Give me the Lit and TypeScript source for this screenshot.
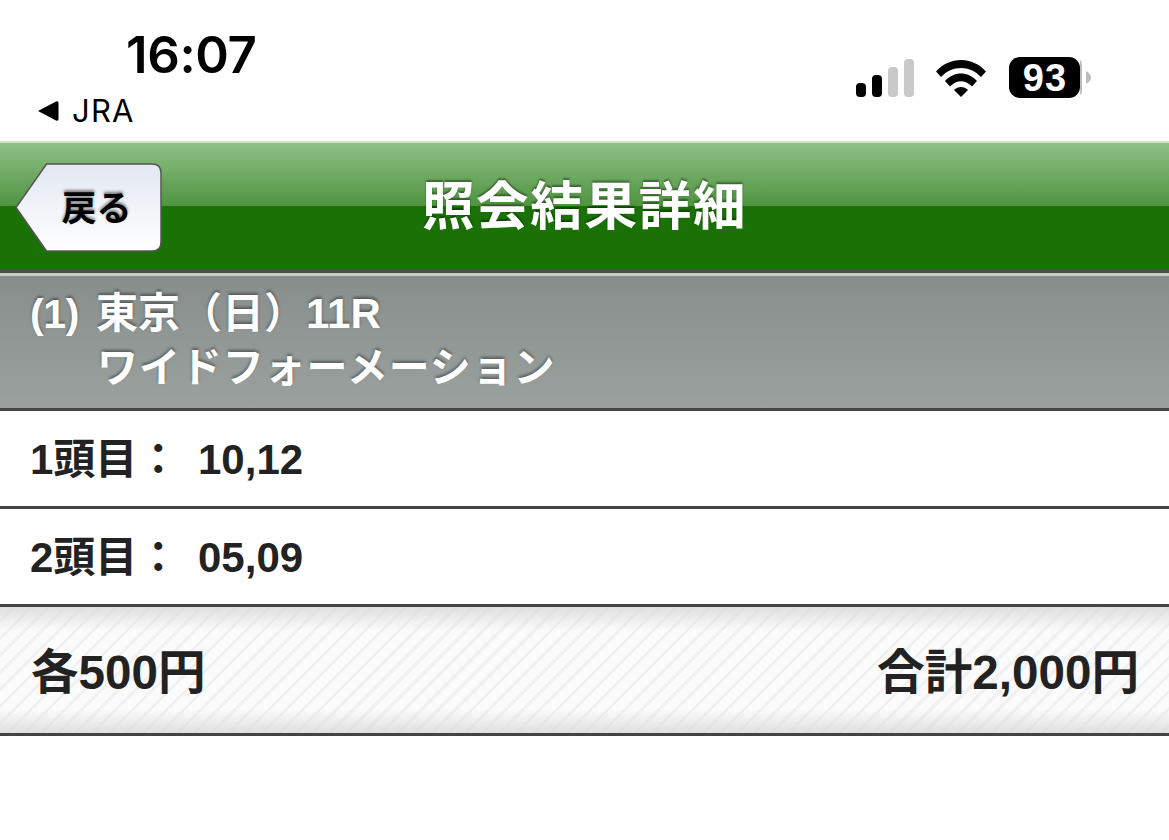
import { LitElement, html, css } from "lit";
import { customElement } from "lit/decorators.js";

@customElement("app-root")
export class AppRoot extends LitElement {
  static styles = css`
    :host {
      display: block;
      width: 1169px;
      height: 840px;
      background: #fff;
      overflow: hidden;
      font-family: "Liberation Sans", "Noto Sans CJK JP", sans-serif;
      font-weight: 700;
      color: #222;
    }
    .status {
      height: 141px;
      box-sizing: border-box;
      display: flex;
      justify-content: space-between;
      background: #fff;
      color: #000;
      font-family: Inter, "Liberation Sans", sans-serif;
    }
    .status-left {
      padding: 25px 0 0 37px;
      display: flex;
      flex-direction: column;
    }
    .time {
      font-size: 51px;
      line-height: 60px;
      font-weight: 600;
      letter-spacing: -0.4px;
      margin-left: 89px;
    }
    .app-back {
      display: flex;
      align-items: center;
      gap: 13px;
      font-size: 31px;
      line-height: 36px;
      font-weight: 400;
      letter-spacing: 1.2px;
      margin-top: 8px;
    }
    .app-back svg { display: block; }
    .status-right {
      display: flex;
      align-items: center;
      padding: 15px 78px 0 0;
      height: 140px;
      box-sizing: border-box;
    }
    .signal { display: block; margin-right: 22px; }
    .wifi { display: block; margin-right: 23px; }
    .battery { display: block; }
    .battery text {
      font-family: "Liberation Sans", sans-serif;
      font-weight: 700;
      font-size: 38px;
      letter-spacing: 1px;
    }
    .header {
      height: 129px;
      box-sizing: border-box;
      display: grid;
      grid-template-columns: 1fr auto 1fr;
      align-items: center;
      padding: 0 15px;
      border-top: 2px solid #cfe5c8;
      background: linear-gradient(#8fc086 0, #4f9440 63px, #1a7106 63px, #1a7106 100%);
    }
    .back {
      position: relative;
      width: 147px;
      height: 89px;
      align-self: start;
      margin-top: 20px;
      display: flex;
      align-items: center;
      justify-content: center;
      font-size: 35px;
      color: #000;
      text-shadow: 0 -2px 3px rgba(0, 0, 0, 0.5);
    }
    .back svg { position: absolute; inset: 0; }
    .back span { position: relative; left: 8px; top: -2px; }
    .title {
      color: #fff;
      font-size: 52.5px;
      line-height: 60px;
      letter-spacing: 1.7px;
      text-shadow: 0 -2px 2px rgba(0, 0, 0, 0.4);
    }
    .rule-a { height: 3px; background: #4a4f48; }
    .race {
      height: 135px;
      box-sizing: border-box;
      border-top: 3px solid #c9cecb;
      padding: 11px 0 0 30px;
      background: linear-gradient(#888e8b, #9aa19e);
      color: #fff;
      font-size: 41px;
      text-shadow: 0 -2px 3px rgba(0, 0, 0, 0.4);
      display: grid;
      grid-template-columns: 67px auto;
      grid-auto-rows: 54px;
      align-content: start;
      justify-content: start;
    }
    .race div { line-height: 54px; }
    .race .name { font-size: 42px; margin-left: -1px; }
    .race .num { font-size: 41px; letter-spacing: -0.3px; }
    .race .kana { grid-column: 2; letter-spacing: 0.9px; }
    .rule { height: 3px; background: #444; }
    .row {
      height: 95px;
      box-sizing: border-box;
      padding: 0 0 0 30px;
      font-size: 42px;
      line-height: 97px;
      background: #fff;
    }
    .row .label { display: inline-block; width: 168px; }
    .footer {
      height: 126px;
      box-sizing: border-box;
      padding: 0 30px 4px 31px;
      display: flex;
      align-items: center;
      justify-content: space-between;
      font-size: 47.6px;
      background:
        linear-gradient(rgba(215, 215, 215, 0.75), rgba(255, 255, 255, 0) 24px, rgba(255, 255, 255, 0) 102px, rgba(215, 215, 215, 0.75)),
        repeating-linear-gradient(135deg, #fbfbfb 0 9px, #f1f1f1 9px 12px);
    }
  `;

  render() {
    return html`
      <div class="status">
        <div class="status-left">
          <div class="time">16:07</div>
          <div class="app-back">
            <svg width="22" height="22" viewBox="0 0 22 22"><path d="M1 11 19 1.500q2.500-.8 2.500 1.500v16q0 2.300-2.500 1.500z" fill="#000"/></svg>
            <span>JRA</span>
          </div>
        </div>
        <div class="status-right">
          <svg class="signal" width="58" height="38" viewBox="0 0 58 38">
            <rect x="0" y="24" width="10" height="14" rx="4" fill="#000"/>
            <rect x="16" y="16" width="10" height="22" rx="4" fill="#000"/>
            <rect x="32" y="8" width="10" height="30" rx="4" fill="#c9c9c9"/>
            <rect x="48" y="0" width="10" height="38" rx="4" fill="#c9c9c9"/>
          </svg>
          <svg class="wifi" width="50" height="38" viewBox="0 0 50 38">
            <path d="M0 12.500C13-3 37-3 50 12.500L45 18C34 6 16 6 5 18Z" fill="#000"/>
            <path d="M9 22C18 12 32 12 41 22L36 27.500C29 20.500 21 20.500 14 27.500Z" fill="#000"/>
            <path d="M18 31C22 27 28 27 32 31L25 38Z" fill="#000"/>
          </svg>
          <svg class="battery" width="82" height="42" viewBox="0 0 82 42">
            <rect x="0" y="0" width="71" height="41" rx="11" fill="#000"/>
            <path d="M71 3q2 1 2 6v23q0 5-2 6z" fill="#bdbdbd"/>
            <path d="M77 14q5 3 5 6.500t-5 6.500z" fill="#bdbdbd"/>
            <text x="36" y="34" text-anchor="middle" fill="#fff">93</text>
          </svg>
        </div>
      </div>
      <div class="header">
        <div class="back">
          <svg width="147" height="89" viewBox="0 0 147 89">
            <defs>
              <linearGradient id="bk" x1="0" y1="0" x2="0" y2="1">
                <stop offset="0" stop-color="#e2e8f2"/>
                <stop offset="1" stop-color="#ffffff"/>
              </linearGradient>
            </defs>
            <path d="M31.500 1H137q9 0 9 9v69q0 9-9 9H31.500L1 44.500Z" fill="url(#bk)" stroke="#555" stroke-width="1.500"/>
          </svg>
          <span>戻る</span>
        </div>
        <div class="title">照会結果詳細</div>
        <div></div>
      </div>
      <div class="rule-a"></div>
      <div class="race">
        <div class="num">(1)</div>
        <div class="name">東京（日）11R</div>
        <div class="kana">ワイドフォーメーション</div>
      </div>
      <div class="rule"></div>
      <div class="row"><span class="label">1頭目：</span>10,12</div>
      <div class="rule"></div>
      <div class="row"><span class="label">2頭目：</span>05,09</div>
      <div class="rule"></div>
      <div class="footer"><div>各500円</div><div>合計2,000円</div></div>
      <div class="rule"></div>
    `;
  }
}
